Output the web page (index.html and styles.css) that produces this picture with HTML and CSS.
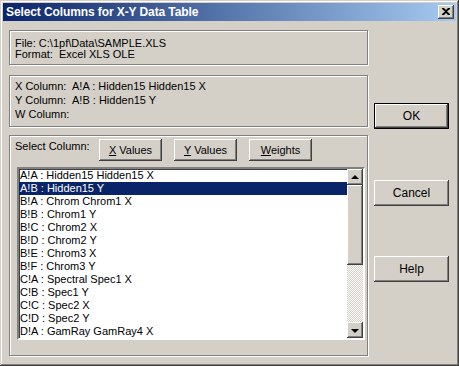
FILE: index.html
```html
<!DOCTYPE html>
<html>
<head>
<meta charset="utf-8">
<link rel="stylesheet" href="styles.css">
</head>
<body>
<div class="window">
  <div class="titlebar">
    <span class="title">Select Columns for X-Y Data Table</span>
    <div class="close">
      <svg width="8" height="7" viewBox="0 0 8 7"><path d="M0 0h2l2 2 2-2h2v1L5 3.5 8 6v1H6L4 5 2 7H0V6l3-2.5L0 1z" fill="#000"/></svg>
    </div>
  </div>
  <div class="body">
    <div class="left">
      <div class="group g1">
        <div class="line">File: C:\1pf\Data\SAMPLE.XLS</div>
        <div class="line">Format:&nbsp; Excel XLS OLE</div>
      </div>
      <div class="group g2">
        <div class="row"><span class="lbl">X Column:</span><span class="val">A!A : Hidden15 Hidden15 X</span></div>
        <div class="row"><span class="lbl">Y Column:</span><span class="val">A!B : Hidden15 Y</span></div>
        <div class="row last"><span class="lbl">W Column:</span><span class="val"></span></div>
      </div>
      <div class="group g3">
        <div class="toolbar">
          <span class="sel-label">Select Column:</span>
          <div class="btn small"><span><u>X</u> Values</span></div>
          <div class="btn small"><span><u>Y</u> Values</span></div>
          <div class="btn small"><span><u>W</u>eights</span></div>
        </div>
        <div class="listbox">
          <div class="items">
            <div class="item">A!A : Hidden15 Hidden15 X</div>
            <div class="item selected">A!B : Hidden15 Y</div>
            <div class="item">B!A : Chrom Chrom1 X</div>
            <div class="item">B!B : Chrom1 Y</div>
            <div class="item">B!C : Chrom2 X</div>
            <div class="item">B!D : Chrom2 Y</div>
            <div class="item">B!E : Chrom3 X</div>
            <div class="item">B!F : Chrom3 Y</div>
            <div class="item">C!A : Spectral Spec1 X</div>
            <div class="item">C!B : Spec1 Y</div>
            <div class="item">C!C : Spec2 X</div>
            <div class="item">C!D : Spec2 Y</div>
            <div class="item">D!A : GamRay GamRay4 X</div>
          </div>
          <div class="scrollbar">
            <div class="btn sb-btn"><span class="arrow up"></span></div>
            <div class="btn thumb"></div>
            <div class="track"></div>
            <div class="btn sb-btn"><span class="arrow down"></span></div>
          </div>
        </div>
      </div>
    </div>
    <div class="right">
      <div class="btn big default"><span>OK</span></div>
      <div class="btn big cancel"><span>Cancel</span></div>
      <div class="btn big help"><span>Help</span></div>
    </div>
  </div>
</div>
</body>
</html>
```
FILE: styles.css
```css
html, body {
  margin: 0;
  padding: 0;
  background: #d4d0c8;
}
body {
  font-family: "Liberation Sans", Arial, sans-serif;
  font-size: 11px;
  color: #000;
}
.window {
  width: 459px;
  height: 366px;
  box-sizing: border-box;
  padding: 3px;
  background: #d4d0c8;
  box-shadow: inset -1px -1px 0 #404040, inset 1px 1px 0 #d4d0c8,
              inset -2px -2px 0 #808080, inset 2px 2px 0 #ffffff;
  display: flex;
  flex-direction: column;
}
.titlebar {
  height: 18px;
  background: linear-gradient(to right, #0a246a, #a6caf0);
  display: flex;
  align-items: center;
  justify-content: space-between;
  padding: 0 2px 0 3px;
}
.title {
  color: #fff;
  font-weight: bold;
  font-size: 12px;
  line-height: 18px;
  letter-spacing: -0.1px;
}
.close {
  width: 16px;
  height: 14px;
  box-sizing: border-box;
  background: #d4d0c8;
  box-shadow: inset -1px -1px 0 #404040, inset 1px 1px 0 #ffffff,
              inset -2px -2px 0 #808080;
  display: flex;
  align-items: center;
  justify-content: center;
  padding: 0 1px 1px 0;
}
.close svg { display: block; }
.body {
  display: flex;
  gap: 6px;
  padding: 9px 6px 0 6px;
}
.left {
  width: 359px;
  display: flex;
  flex-direction: column;
}
.group {
  box-sizing: border-box;
  border: 1px solid #808080;
  box-shadow: 1px 1px 0 #ffffff, inset 1px 1px 0 #ffffff;
}
.g1 {
  height: 35px;
  margin-bottom: 10px;
  padding: 7px 0 0 5px;
}
.g1 .line { line-height: 11px; }
.g2 {
  height: 52px;
  margin-bottom: 8px;
  padding: 3px 0 0 5px;
}
.row {
  display: flex;
  line-height: 14px;
}
.row.last { line-height: 15px; }
.lbl {
  flex: 0 0 57px;
  width: 57px;
  white-space: nowrap;
}
.val { white-space: nowrap; }
.g3 {
  height: 221px;
  padding: 3px 0 0 7px;
}
.toolbar {
  display: flex;
  height: 22px;
  gap: 12px;
}
.sel-label {
  flex: 0 0 72px;
  width: 72px;
  margin-left: -2px;
  line-height: 15px;
  white-space: nowrap;
}
.btn {
  box-sizing: border-box;
  background: #d4d0c8;
  box-shadow: inset -1px -1px 0 #404040, inset 1px 1px 0 #ffffff,
              inset -2px -2px 0 #808080;
  display: flex;
  align-items: center;
  justify-content: center;
  white-space: nowrap;
}
.small {
  flex: 0 0 63px;
  width: 63px;
  height: 22px;
  padding-bottom: 1px;
}
.listbox {
  margin-top: 6px;
  width: 348px;
  height: 173px;
  box-sizing: border-box;
  border: 2px solid;
  border-color: #808080 #ffffff #ffffff #808080;
  box-shadow: inset 1px 1px 0 #404040;
  background: #fff;
  display: flex;
}
.items {
  flex: 1;
}
.item {
  height: 13px;
  line-height: 13px;
  padding-left: 1px;
  white-space: nowrap;
}
.item.selected {
  background: #0a246a;
  color: #fff;
}
.scrollbar {
  flex: 0 0 16px;
  width: 16px;
  display: flex;
  flex-direction: column;
  background: #d4d0c8;
}
.sb-btn {
  width: 16px;
  height: 16px;
}
.thumb {
  width: 16px;
  height: 80px;
}
.track {
  flex: 1;
  background: repeating-conic-gradient(#d4d0c8 0 25%, #ffffff 0 50%) 0 0 / 2px 2px;
}
.arrow {
  width: 0;
  height: 0;
  border-left: 4px solid transparent;
  border-right: 4px solid transparent;
}
.arrow.up { border-bottom: 4px solid #000; margin-bottom: 1px; }
.arrow.down { border-top: 4px solid #000; margin-top: 1px; }
.right {
  width: 75px;
  display: flex;
  flex-direction: column;
}
.big {
  width: 75px;
  height: 26px;
  font-size: 12px;
}
.default {
  margin-top: 73px;
  border: 1px solid #000;
}
.cancel { margin-top: 51px; }
.help { margin-top: 50px; }
```
